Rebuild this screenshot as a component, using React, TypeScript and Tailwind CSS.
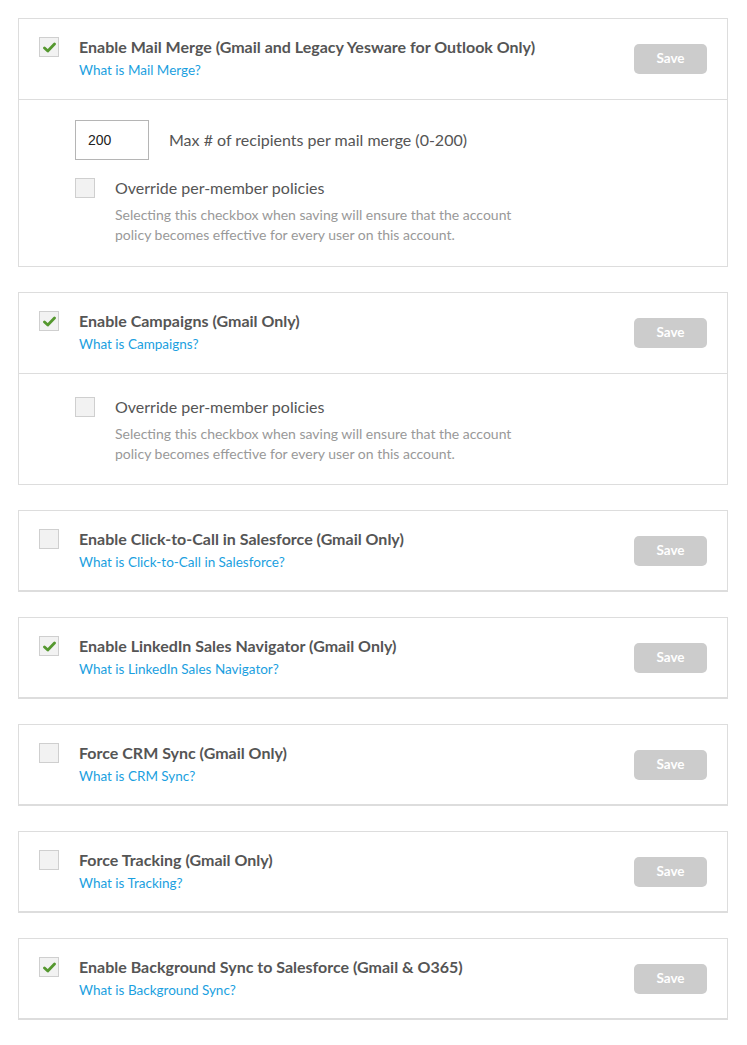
import React from "react";

const Check = ({ checked }: { checked: boolean }) => (
  <div className="w-5 h-5 shrink-0 border border-[#cfcfcf] bg-[#f2f2f2] flex items-center justify-center">
    {checked && (
      <svg width="13" height="11" viewBox="0 0 13 11">
        <path d="M1.5 6 L4.8 9 L11.5 2" fill="none" stroke="#55982f" strokeWidth="2.8" strokeLinecap="round" strokeLinejoin="round" />
      </svg>
    )}
  </div>
);

const Override = () => (
  <div className="flex">
    <Check checked={false} />
    <div className="ml-5">
      <div className="text-[16px] leading-5 text-[#555]">Override per-member policies</div>
      <div className="mt-[7px] text-[14px] leading-5 text-[#999] max-w-[405px]">
        Selecting this checkbox when saving will ensure that the account policy becomes effective for every user on this account.
      </div>
    </div>
  </div>
);

type CardProps = { checked: boolean; title: string; link: string; children?: React.ReactNode };

const Card = ({ checked, title, link, children }: CardProps) => (
  <div className="border border-[#dddddd] bg-white mb-[25px]">
    <div
      className={
        "flex items-start justify-between border-b border-[#dddddd] pl-5 pr-5 pt-[18px] " +
        (children ? "pb-[19px]" : "pb-[18px]")
      }
    >
      <div className="flex items-start">
        <Check checked={checked} />
        <div className="ml-5">
          <div className="text-[16px] leading-5 font-bold text-[#555]">{title}</div>
          <a className="block mt-[3px] text-[13.5px] leading-5 text-[#1b9fe0]">{link}</a>
        </div>
      </div>
      <button className="self-center w-[73px] h-[30px] rounded-[5px] bg-[#cccccc] text-white text-[13.5px] font-bold">Save</button>
    </div>
    {children}
  </div>
);

export default function App() {
  return (
    <div className="bg-white min-h-[1045px] pt-[18px] pl-[18px] pr-[19px]" style={{ fontFamily: "Lato, 'Liberation Sans', sans-serif" }}>
      <Card checked title="Enable Mail Merge (Gmail and Legacy Yesware for Outlook Only)" link="What is Mail Merge?">
        <div className="pt-5 pb-[21px] pl-[56px]">
          <div className="flex items-center">
            <div className="w-[74px] h-10 border border-[#b5b5b5] flex items-center pl-3 text-[14px] text-[#222]" style={{ fontFamily: "'Liberation Sans', sans-serif" }}>200</div>
            <div className="ml-5 text-[16px] text-[#555]">Max # of recipients per mail merge (0-200)</div>
          </div>
          <div className="mt-[18px]">
            <Override />
          </div>
        </div>
      </Card>
      <Card checked title="Enable Campaigns (Gmail Only)" link="What is Campaigns?">
        <div className="pt-[23px] pb-5 pl-[56px]">
          <Override />
        </div>
      </Card>
      <Card checked={false} title="Enable Click-to-Call in Salesforce (Gmail Only)" link="What is Click-to-Call in Salesforce?" />
      <Card checked title="Enable LinkedIn Sales Navigator (Gmail Only)" link="What is LinkedIn Sales Navigator?" />
      <Card checked={false} title="Force CRM Sync (Gmail Only)" link="What is CRM Sync?" />
      <Card checked={false} title="Force Tracking (Gmail Only)" link="What is Tracking?" />
      <Card checked title="Enable Background Sync to Salesforce (Gmail & O365)" link="What is Background Sync?" />
    </div>
  );
}
